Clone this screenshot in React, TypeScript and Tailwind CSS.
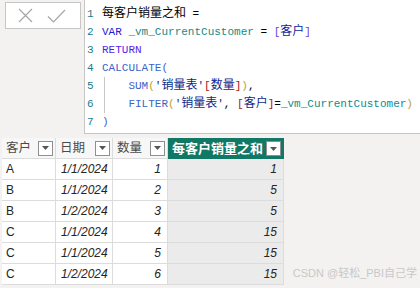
import React from 'react';

const mono = { fontFamily: '"Liberation Mono", "Noto Sans CJK SC", monospace' };

// CJK glyphs in the editor are a touch wider than the 11px mono cell
const Cjk: React.FC<{ children: React.ReactNode; className?: string }> = ({ children, className }) => (
  <span className={`text-[12px] ${className ?? ''}`}>{children}</span>
);

const Dropdown: React.FC = () => (
  <span className="flex h-[15px] w-[15px] shrink-0 items-center justify-center border border-[#8f8f8f] bg-white">
    <svg width="7" height="4" viewBox="0 0 7 4">
      <path d="M0 0h7L3.5 4z" fill="#555" />
    </svg>
  </span>
);

const rows = [
  { c: 'A', d: '1/1/2024', q: 1, s: 1 },
  { c: 'B', d: '1/1/2024', q: 2, s: 5 },
  { c: 'B', d: '1/2/2024', q: 3, s: 5 },
  { c: 'C', d: '1/1/2024', q: 4, s: 15 },
  { c: 'C', d: '1/1/2024', q: 5, s: 15 },
  { c: 'C', d: '1/2/2024', q: 6, s: 15 },
];

const App: React.FC = () => {
  return (
    <div
      className="relative h-[288px] w-[420px] overflow-hidden bg-[#f3f2f1]"
      style={{ fontFamily: '"Liberation Sans", "Noto Sans CJK SC", sans-serif' }}
    >
      {/* formula bar */}
      <div className="flex h-[134px]">
        <div className="w-[84px] pl-[5px] pt-[2px]">
          <div className="flex h-[27px] w-[76px] items-center gap-[14px] border border-[#c8c6c4] bg-white pl-[12px]">
            <svg width="15" height="15" viewBox="0 0 15 15">
              <path d="M1 1l13 13M14 1L1 14" stroke="#a6a6a6" strokeWidth="1.2" fill="none" />
            </svg>
            <svg width="19" height="14" viewBox="0 0 19 14">
              <path d="M1 7.5l5.5 5.5L18 1" stroke="#a6a6a6" strokeWidth="1.2" fill="none" />
            </svg>
          </div>
        </div>
        <div className="flex-1 border-b border-l border-[#c8c6c4] bg-white pt-[5px] text-[11px] leading-[18px]" style={mono}>
          <div className="flex">
            <div className="w-[17px] pl-[2px] text-[#237893]">
              {[1, 2, 3, 4, 5, 6, 7].map((n) => (
                <div key={n}>{n}</div>
              ))}
            </div>
            <div className="whitespace-pre text-black">
              <div>
                <Cjk>每客户销量之和</Cjk> =
              </div>
              <div>
                <span className="text-[#1a1ad6]">VAR</span> <span className="text-[#148a8a]">_vm_CurrentCustomer</span> ={' '}
                <span className="text-[#6b3fe0]">[</span>
                <Cjk className="text-[#0f1f9a]">客户</Cjk>
                <span className="text-[#6b3fe0]">]</span>
              </div>
              <div className="text-[#5a1ee8]">RETURN</div>
              <div className="text-[#3a64c8]">
                CALCULATE<span className="text-[#3a64c8]">(</span>
              </div>
              <div className="relative">
                <span className="absolute left-[2px] top-0 h-[36px] w-px bg-[#c8c8c8]" />
                {'    '}
                <span className="text-[#3a64c8]">SUM</span>
                <span className="text-[#b8a032]">(</span>
                <span className="text-[#0f1f8a]">'<Cjk>销量表</Cjk>'</span>
                <span className="text-[#a31515]">[</span>
                <Cjk className="text-[#0f1f8a]">数量</Cjk>
                <span className="text-[#a31515]">]</span>
                <span className="text-[#b8a032]">)</span>,
              </div>
              <div>
                {'    '}
                <span className="text-[#3a64c8]">FILTER</span>
                <span className="text-[#b8a032]">(</span>
                <span className="text-[#0f1f8a]">'<Cjk>销量表</Cjk>'</span>,{' '}
                <span className="text-[#a31515]">[</span>
                <Cjk className="text-[#0f1f8a]">客户</Cjk>
                <span className="text-[#a31515]">]</span>=<span className="text-[#148a8a]">_vm_CurrentCustomer</span>
                <span className="text-[#b8a032]">)</span>
              </div>
              <div className="text-[#3a64c8]">)</div>
            </div>
          </div>
        </div>
      </div>

      {/* table */}
      <div className="ml-[2px] mt-[4px] w-[282px]">
        <div className="flex h-[21px] whitespace-nowrap text-[12.5px] text-[#4a4a4a]">
          {['客户', '日期', '数量'].map((h, i) => (
            <div
              key={h}
              className={`flex items-center justify-between border-r border-b border-[#dcdcdc] bg-[#f7f7f7] pl-[4px] pr-[2px] ${
                i === 0 ? 'w-[54px]' : i === 1 ? 'w-[57px]' : 'w-[55px]'
              }`}
            >
              <span>{h}</span>
              <Dropdown />
            </div>
          ))}
          <div className="flex flex-1 items-center justify-between bg-[#117865] pl-[4px] pr-[3px] text-[13px] font-bold text-white">
            <span>每客户销量之和</span>
            <Dropdown />
          </div>
        </div>
        {rows.map((r, idx) => (
          <div key={idx} className="flex h-[21px] text-[12px] leading-[20px] text-[#252423]">
            <div className="w-[54px] border-r border-b border-[#dcdcdc] bg-white pl-[4px]">{r.c}</div>
            <div className="w-[57px] border-r border-b border-[#dcdcdc] bg-white pl-[5px] italic">{r.d}</div>
            <div className="w-[55px] border-r border-b border-[#dcdcdc] bg-white pr-[6px] text-right italic">{r.q}</div>
            <div className="flex-1 border-b border-r border-[#dcdcdc] bg-[#ebebeb] pr-[6px] text-right italic">{r.s}</div>
          </div>
        ))}
      </div>

      <div className="absolute bottom-[7px] right-[3px] text-[11px] text-[#c8c8c8]">CSDN @轻松_PBI自己学</div>
    </div>
  );
};

export default App;
